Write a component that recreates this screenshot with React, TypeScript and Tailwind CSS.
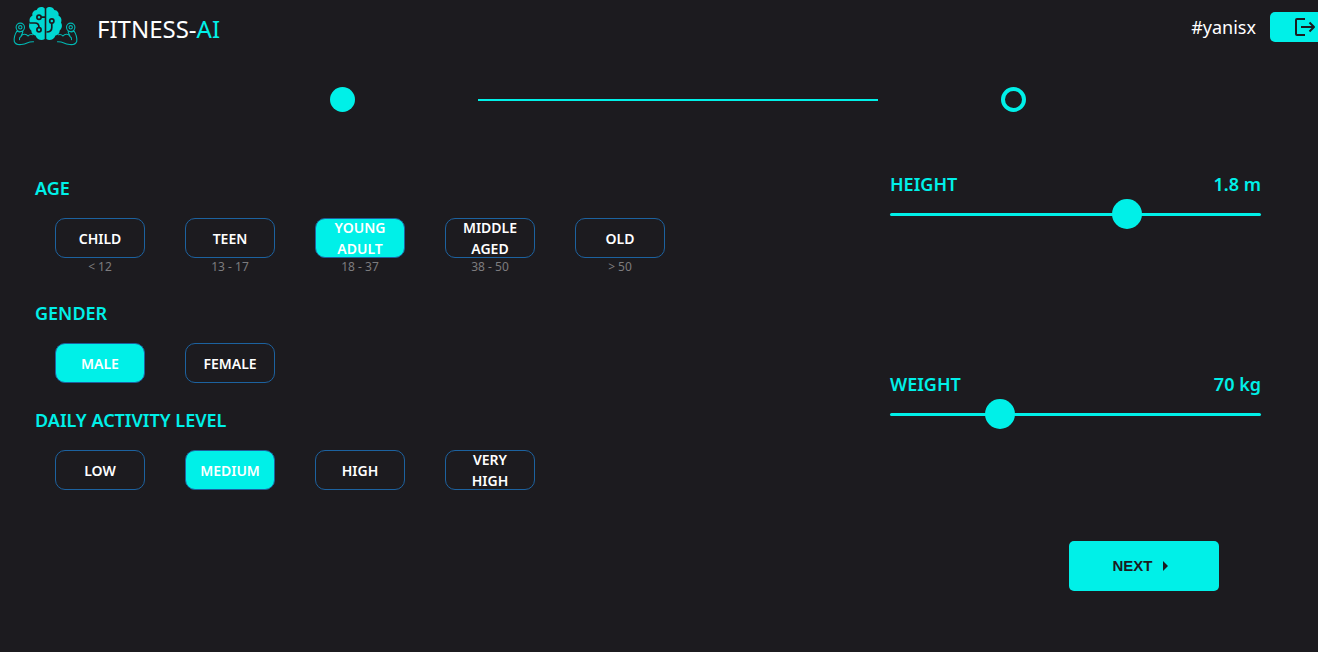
import { useState } from "react";

type Option = { label: string; hint?: string };

const ages: Option[] = [
  { label: "CHILD", hint: "< 12" },
  { label: "TEEN", hint: "13 - 17" },
  { label: "YOUNG ADULT", hint: "18 - 37" },
  { label: "MIDDLE AGED", hint: "38 - 50" },
  { label: "OLD", hint: "> 50" },
];
const genders: Option[] = [{ label: "MALE" }, { label: "FEMALE" }];
const activityLevels: Option[] = [
  { label: "LOW" },
  { label: "MEDIUM" },
  { label: "HIGH" },
  { label: "VERY HIGH" },
];

function Arm() {
  return (
    <g fill="none" stroke="#00b9b4" strokeWidth="1.1" strokeLinecap="round" strokeLinejoin="round">
      <circle cx="20.3" cy="27.3" r="4.200" />
      <circle cx="20.3" cy="27.3" r="1.700" />
      <path d="M17 31C15 34 13.800 38 14.300 41.500c1.200 3.200 5.200 3.500 8.700 2.800 3.500-.7 5.500-2.700 10.500-2.500" />
      <path d="M17 31.200l2.500.8 3-.8M22.800 31.500c.2 1.500-1.500 3-1.800 5 1.200-2.500 5-3.300 7-.5 1.500-1.500 3-1.700 4.500-1.200M21 36.500c-1.300.7-1.800 1.800-1.500 3.200" />
    </g>
  );
}

function Logo() {
  return (
    <svg viewBox="12 4 68 44" className="h-11 w-[68px] shrink-0" aria-hidden="true">
      <Arm />
      <g transform="translate(91 0) scale(-1 1)">
        <Arm />
      </g>
      <g fill="#00d8d2">
        <path d="M44.700 8.500c-2.500-2.500-7-1.500-8 1.500-3.200.2-5 3-4.200 5.500-3 1.500-3.500 5-2.500 7-1.800 3-.8 6.500 1.300 8 0 3 2 4.800 4.200 5 1.500 4.500 6.500 5.500 9.200 3.500z" />
        <path d="M46.300 8.500c2.500-2.500 7-1.500 8 1.500 3.200.2 5 3 4.200 5.500 3 1.500 3.500 5 2.500 7 1.800 3 .8 6.500-1.300 8 0 3-2 4.800-4.200 5-1.500 4.500-6.500 5.500-9.200 3.500z" />
      </g>
      <g fill="none" stroke="#1c1b1f" strokeWidth="1.700">
        <circle cx="39" cy="17.200" r="2.100" />
        <path d="M41 17.200h4M30 23h5c2.300 0 4 1.500 4 4.500" />
        <circle cx="39" cy="29.800" r="2.100" />
        <circle cx="51.800" cy="21" r="2.100" />
        <path d="M51.800 23v4.500c0 3.200-1.800 4.500-5.300 4.500" />
      </g>
    </svg>
  );
}

function LogoutIcon() {
  return (
    <svg
      viewBox="0 0 22 20"
      className="h-5 w-[22px]"
      fill="none"
      stroke="#1c1b1f"
      strokeWidth="2"
      strokeLinejoin="round"
      aria-hidden="true"
    >
      <path d="M11 2H3Q2 2 2 3V17Q2 18 3 18H11M7 10H20M15.500 5.500L20 10L15.500 14.500" />
    </svg>
  );
}

function ChoiceGroup({ title, options, initial }: { title: string; options: Option[]; initial: string }) {
  const [selected, setSelected] = useState(initial);
  return (
    <section role="group" aria-label={title}>
      <h2 className="text-lg leading-6 font-semibold text-[#00f0e8]">{title}</h2>
      <div className="mt-[18px] flex flex-wrap gap-x-10 gap-y-4 pl-5">
        {options.map(({ label, hint }) => (
          <div key={label} className="flex w-[90px] flex-col items-center">
            <button
              type="button"
              aria-pressed={selected === label}
              onClick={() => setSelected(label)}
              className={`flex h-10 w-full items-center justify-center rounded-[10px] border border-[#1c629f] px-3 text-sm leading-[21px] font-semibold text-white ${
                selected === label ? "bg-[#00f0e8]" : "bg-transparent"
              }`}
            >
              {label}
            </button>
            {hint && <span className="text-xs leading-[18px] text-[#7c7c7e]">{hint}</span>}
          </div>
        ))}
      </div>
    </section>
  );
}

type MeasureProps = {
  id: string;
  title: string;
  unit: string;
  min: number;
  max: number;
  step: number;
  initial: number;
};

function Measure({ id, title, unit, min, max, step, initial }: MeasureProps) {
  const [value, setValue] = useState(initial);
  return (
    <div>
      <div className="flex justify-between text-lg leading-6 font-semibold text-[#00f0e8]">
        <label htmlFor={id}>{title}</label>
        <output htmlFor={id}>
          {value} {unit}
        </output>
      </div>
      <input
        id={id}
        type="range"
        min={min}
        max={max}
        step={step}
        value={value}
        onChange={(e) => setValue(Number(e.target.value))}
        className="mt-[3px] block h-[30px] w-full cursor-pointer appearance-none bg-transparent [&::-webkit-slider-runnable-track]:h-[3px] [&::-webkit-slider-runnable-track]:rounded-full [&::-webkit-slider-runnable-track]:bg-[#00f0e8] [&::-webkit-slider-thumb]:-mt-[14px] [&::-webkit-slider-thumb]:size-[30px] [&::-webkit-slider-thumb]:appearance-none [&::-webkit-slider-thumb]:rounded-full [&::-webkit-slider-thumb]:bg-[#00f0e8]"
      />
    </div>
  );
}

export default function App() {
  return (
    <div className="min-h-screen overflow-x-hidden bg-[#1c1b1f] font-['Noto_Sans',sans-serif] text-white">
      <div className="w-[calc(100%+38px)]">
        <header className="flex h-[60px] items-start justify-between pr-4 pl-3">
          <a href="#home" className="flex items-center gap-[17px] pt-1">
            <Logo />
            <span className="pt-1.5 text-2xl leading-9 font-normal">
              FITNESS-<span className="text-[#00f0e8]">AI</span>
            </span>
          </a>
          <div className="flex items-center gap-[14px] pt-3">
            <span className="text-lg leading-[30px]">#yanisx</span>
            <button
              type="button"
              aria-label="Log out"
              className="flex h-[30px] w-[70px] items-center justify-center rounded-[5px] bg-[#00f0e8]"
            >
              <LogoutIcon />
            </button>
          </div>
        </header>
        <div className="flex items-center justify-center gap-[123px] pt-[27px]" aria-label="Step 1 of 2" role="img">
          <span className="size-[25px] rounded-full bg-[#00f0e8]" />
          <span className="h-[2px] w-[400px] bg-[#00f0e8]" />
          <span className="size-[25px] rounded-full border-4 border-[#00f0e8]" />
        </div>
      </div>

      <main className="flex justify-between pt-[60px] pr-[57px] pl-[35px]">
        <div className="flex flex-col gap-[25px] pt-1">
          <ChoiceGroup title="AGE" options={ages} initial="YOUNG ADULT" />
          <ChoiceGroup title="GENDER" options={genders} initial="MALE" />
          <ChoiceGroup title="DAILY ACTIVITY LEVEL" options={activityLevels} initial="MEDIUM" />
        </div>
        <div className="flex w-[371px] flex-col">
          <Measure id="height" title="HEIGHT" unit="m" min={0.5} max={2.5} step={0.1} initial={1.8} />
          <div className="mt-[143px]">
            <Measure id="weight" title="WEIGHT" unit="kg" min={0} max={250} step={1} initial={70} />
          </div>
          <button
            type="button"
            className="mt-28 mr-[42px] flex h-[50px] w-[150px] items-center justify-center gap-[10px] self-end rounded-[5px] bg-[#00f0e8] pr-2 font-['Liberation_Sans',sans-serif] text-[15px] leading-5 font-bold text-[#1c1b1f]"
          >
            NEXT
            <svg viewBox="0 0 5 10" className="h-[10px] w-[5px]" fill="currentColor" aria-hidden="true">
              <path d="M0 0L5 5L0 10z" />
            </svg>
          </button>
        </div>
      </main>
    </div>
  );
}
